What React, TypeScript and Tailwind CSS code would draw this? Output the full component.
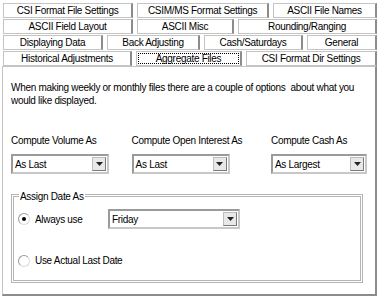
import React from 'react';

const tabRows = [
  [
    { label: 'CSI Format File Settings', w: 'w-[130px]' },
    { label: 'CSIM/MS Format Settings', w: 'w-[132px]' },
    { label: 'ASCII File Names', w: 'flex-1' },
  ],
  [
    { label: 'ASCII Field Layout', w: 'w-[130px]' },
    { label: 'ASCII Misc', w: 'w-[97px]' },
    { label: 'Rounding/Ranging', w: 'flex-1' },
  ],
  [
    { label: 'Displaying Data', w: 'w-[100px]' },
    { label: 'Back Adjusting', w: 'w-[93px]' },
    { label: 'Cash/Saturdays', w: 'w-[99px]' },
    { label: 'General', w: 'flex-1' },
  ],
  [
    { label: 'Historical Adjustments', w: 'w-[129px]' },
    { label: 'Aggregate Files', w: 'w-[106px]', active: true },
    { label: 'CSI Format Dir Settings', w: 'flex-1' },
  ],
];

function Tab({ label, w, active }: { label: string; w: string; active?: boolean }) {
  return (
    <div
      className={`${w} h-[15px] flex whitespace-nowrap border border-[#c4c4c4] border-r-2 border-r-[#8c8c8c] bg-white p-[1px]`}
    >
      <div
        className={`flex-1 flex items-center justify-center leading-[11px] ${active ? 'border border-dotted border-black' : ''}`}
      >
        {label}
      </div>
    </div>
  );
}

function Select({ value, w }: { value: string; w: string }) {
  return (
    <div
      className={`${w} h-[20px] flex items-center border-2 border-[#c8c8c8] border-t-[#9a9a9a] border-l-[#9a9a9a] bg-white`}
    >
      <span className="flex-1 pl-[2px]">{value}</span>
      <div className="w-[14px] h-[14px] mr-[1px] flex items-center justify-center border border-[#bdbdbd] border-r-[#7a7a7a] border-b-[#7a7a7a] bg-[#e8e8e8]">
        <svg width="7" height="4" viewBox="0 0 7 4">
          <path d="M0 0h7L3.5 4z" fill="#222" />
        </svg>
      </div>
    </div>
  );
}

function Radio({ checked, label }: { checked?: boolean; label: string }) {
  return (
    <div className="flex items-center gap-[5px]">
      <div className="w-[12px] h-[12px] rounded-full border border-[#9a9a9a] border-b-[#dcdcdc] border-r-[#dcdcdc] bg-white flex items-center justify-center">
        {checked && <div className="w-[4px] h-[4px] rounded-full bg-black" />}
      </div>
      <span>{label}</span>
    </div>
  );
}

export default function App() {
  return (
    <div className="w-[380px] h-[300px] bg-white overflow-hidden text-black text-[10px] font-['Liberation_Sans',Arial,sans-serif] tracking-[-0.3px]">
      {/* onglets */}
      <div className="flex flex-col gap-[1px] pt-[3px] pl-[3px] pr-[3px]">
        {tabRows.map((row, i) => (
          <div key={i} className="flex gap-[4px]">
            {row.map((t) => (
              <Tab key={t.label} label={t.label} w={t.w} active={(t as any).active} />
            ))}
          </div>
        ))}
      </div>

      {/* panneau */}
      <div className="ml-[2px] mr-[3px] h-[230px] border border-[#c4c4c4] border-r-2 border-b-2 border-r-[#8c8c8c] border-b-[#8c8c8c] px-[8px] pt-[14px]">
        <p className="leading-[13px] w-[360px]">
          When making weekly or monthly files there are a couple of options&nbsp; about what you would like displayed.
        </p>

        <div className="flex mt-[26px]">
          <div className="w-[122px] flex flex-col gap-[6px]">
            <span>Compute Volume As</span>
            <Select value="As Last" w="w-[98px]" />
          </div>
          <div className="w-[141px] flex flex-col gap-[6px]">
            <span>Compute Open Interest As</span>
            <Select value="As Last" w="w-[98px]" />
          </div>
          <div className="flex flex-col gap-[6px]">
            <span>Compute Cash As</span>
            <Select value="As Largest" w="w-[96px]" />
          </div>
        </div>

        <div className="relative mt-[20px] w-[352px] h-[89px] border-[3px] border-double border-[#b4b4b4]">
          <span className="absolute -top-[8px] left-[5px] bg-white px-[1px]">Assign Date As</span>
          <div className="flex items-center pl-[4px] pt-[12px]">
            <div className="w-[90px]">
              <Radio checked label="Always use" />
            </div>
            <Select value="Friday" w="w-[132px]" />
          </div>
          <div className="pl-[4px] pt-[24px]">
            <Radio label="Use Actual Last Date" />
          </div>
        </div>
      </div>
    </div>
  );
}
